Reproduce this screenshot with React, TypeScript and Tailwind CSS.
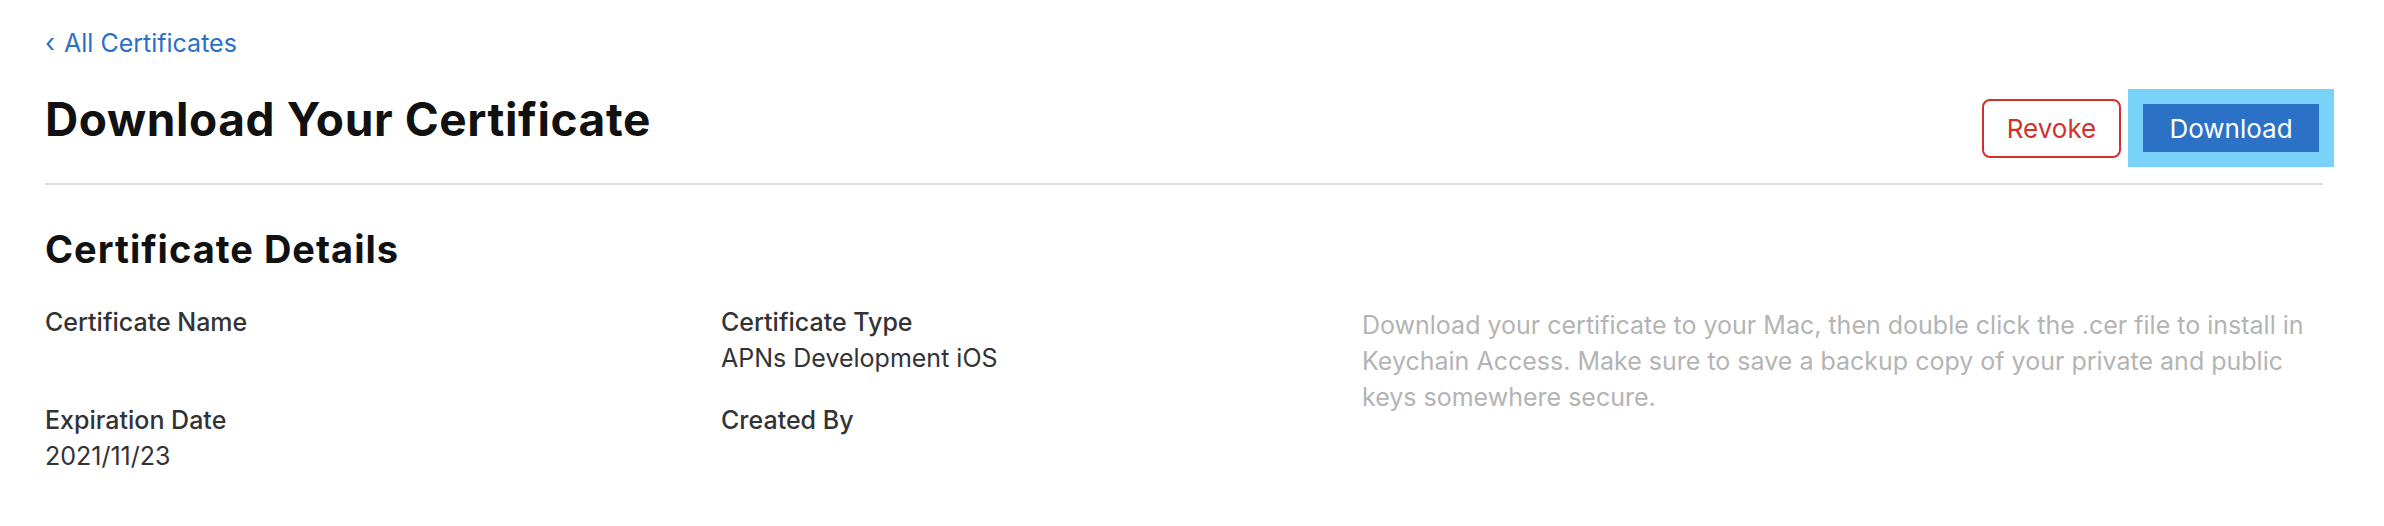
import React from 'react';

const font = { fontFamily: 'Inter, "Noto Sans", "Liberation Sans", sans-serif' };

function Field({ label, value }: { label: string; value?: string }) {
  return (
    <div>
      <div className="text-[25px] font-medium leading-[36px] text-[#333336]">{label}</div>
      <div className="min-h-[36px] text-[25px] leading-[36px] text-[#333336]">{value}</div>
    </div>
  );
}

export default function App() {
  return (
    <div className="min-h-screen bg-white pl-[45px] pr-[61px] pt-[27px]" style={font}>
      <a href="#" className="flex items-center gap-[9px] text-[25px] leading-[32px] text-[#2d6fc6]">
        <span className="text-[26px]">‹</span>
        <span>All Certificates</span>
      </a>

      <div className="mt-[30px] flex items-start justify-between">
        <h1 className="mt-[4px] text-[46px] font-bold leading-[52px] tracking-[0.6px] text-[#111111]">
          Download Your Certificate
        </h1>
        <div className="-mr-[11px] flex items-center gap-[7px]">
          <button className="flex h-[59px] w-[139px] items-center justify-center rounded-[8px] border-2 border-[#d0312d] text-[26px] text-[#d0312d]">
            Revoke
          </button>
          <button className="flex h-[78px] w-[206px] items-center justify-center border-[15px] border-[#79d3f8] bg-[#2b71c6] bg-clip-padding text-[26px] text-white">
            Download
          </button>
        </div>
      </div>

      <div className="mt-[16px] h-[2px] bg-[#dedede]" />

      <h2 className="mt-[42px] text-[38px] font-bold leading-[44px] tracking-[1px] text-[#111111]">
        Certificate Details
      </h2>

      <div className="mt-[33px] grid grid-cols-[676px_641px_1fr]">
        <div className="flex flex-col gap-[26px]">
          <Field label="Certificate Name" />
          <Field label="Expiration Date" value="2021/11/23" />
        </div>
        <div className="flex flex-col gap-[26px]">
          <Field label="Certificate Type" value="APNs Development iOS" />
          <Field label="Created By" />
        </div>
        <p className="mt-[3px] text-[25px] leading-[36px] text-[#b4b4b4]">
          Download your certificate to your Mac, then double click the .cer file to install in Keychain Access. Make
          sure to save a backup copy of your private and public keys somewhere secure.
        </p>
      </div>
    </div>
  );
}
